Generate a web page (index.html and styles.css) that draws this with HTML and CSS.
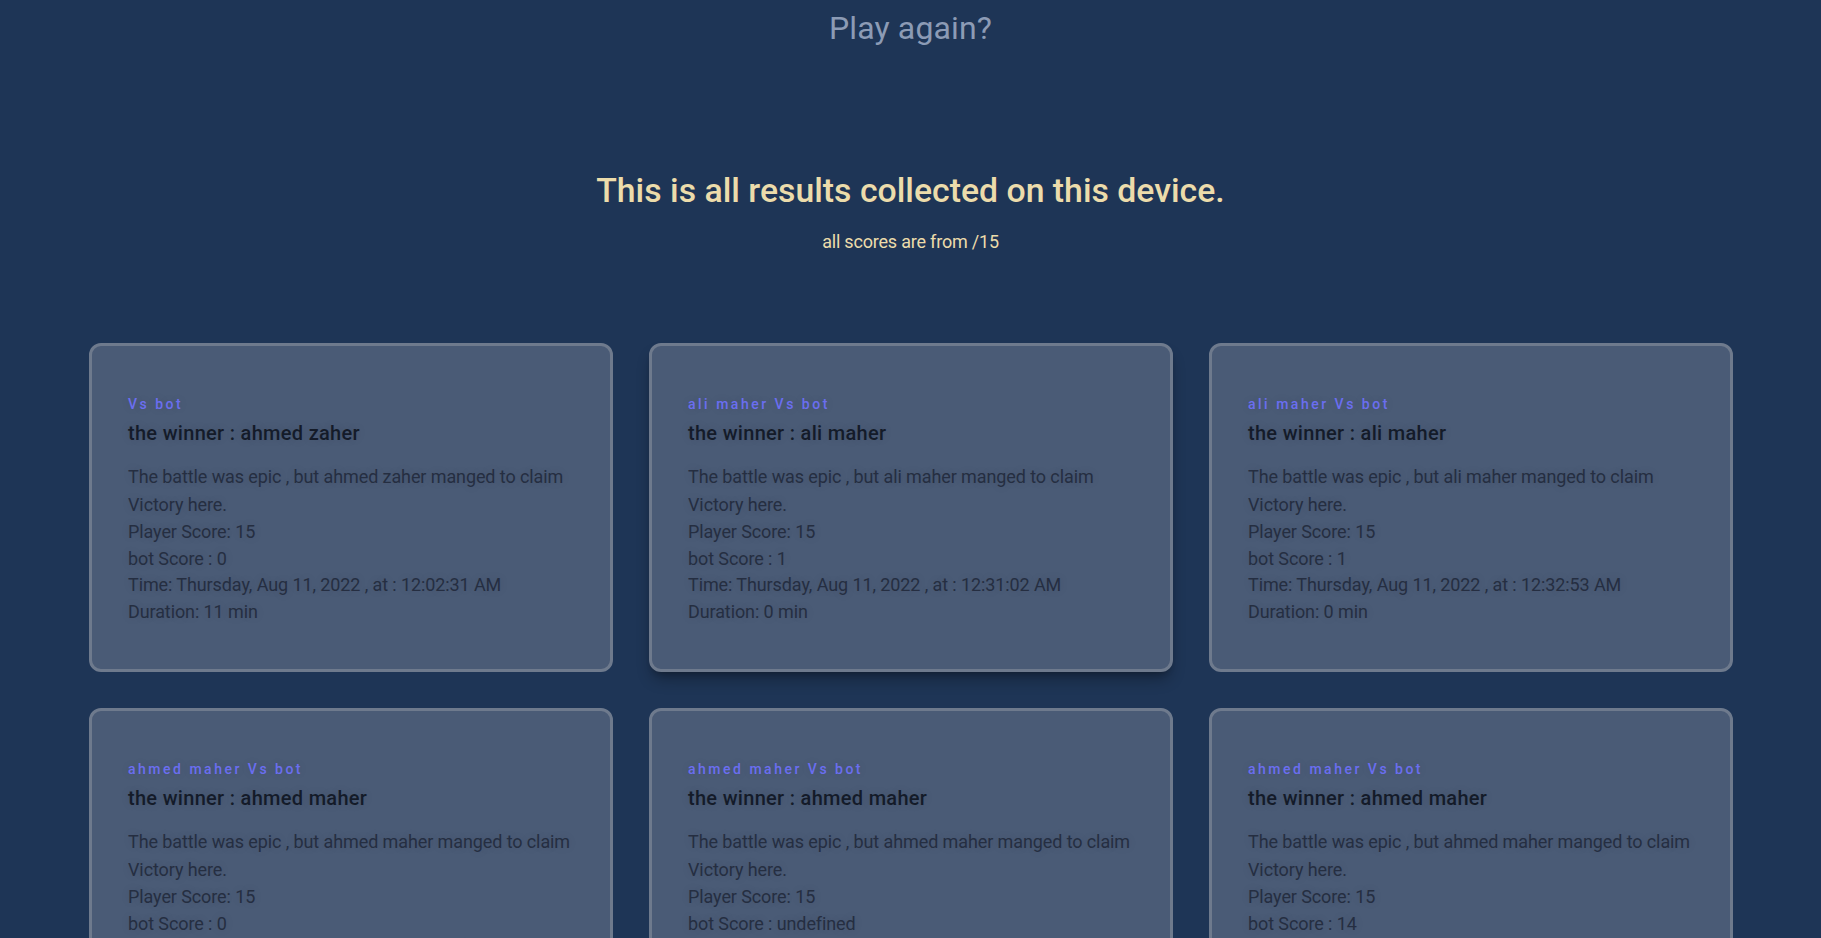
FILE: index.html
```html
<!DOCTYPE html>
<html lang="en">
<head>
<meta charset="utf-8">
<title>Results</title>
<link rel="stylesheet" href="styles.css">
</head>
<body>
<header class="top">
  <a class="play-again" href="#">Play again?</a>
</header>

<section class="intro">
  <h1 class="intro-title">This is all results collected on this device.</h1>
  <p class="intro-sub">all scores are from /15</p>
</section>

<main class="results">
  <article class="card">
    <h2 class="card-label">Vs bot</h2>
    <h3 class="card-title">the winner : ahmed zaher</h3>
    <p class="card-text">The battle was epic , but ahmed zaher manged to claim Victory here.</p>
    <div class="card-line">Player Score: 15</div>
    <div class="card-line">bot Score : 0</div>
    <div class="card-line">Time: Thursday, Aug 11, 2022 , at : 12:02:31 AM</div>
    <div class="card-line">Duration: 11 min</div>
  </article>

  <article class="card card-raised">
    <h2 class="card-label">ali maher Vs bot</h2>
    <h3 class="card-title">the winner : ali maher</h3>
    <p class="card-text">The battle was epic , but ali maher manged to claim Victory here.</p>
    <div class="card-line">Player Score: 15</div>
    <div class="card-line">bot Score : 1</div>
    <div class="card-line">Time: Thursday, Aug 11, 2022 , at : 12:31:02 AM</div>
    <div class="card-line">Duration: 0 min</div>
  </article>

  <article class="card">
    <h2 class="card-label">ali maher Vs bot</h2>
    <h3 class="card-title">the winner : ali maher</h3>
    <p class="card-text">The battle was epic , but ali maher manged to claim Victory here.</p>
    <div class="card-line">Player Score: 15</div>
    <div class="card-line">bot Score : 1</div>
    <div class="card-line">Time: Thursday, Aug 11, 2022 , at : 12:32:53 AM</div>
    <div class="card-line">Duration: 0 min</div>
  </article>

  <article class="card">
    <h2 class="card-label">ahmed maher Vs bot</h2>
    <h3 class="card-title">the winner : ahmed maher</h3>
    <p class="card-text">The battle was epic , but ahmed maher manged to claim Victory here.</p>
    <div class="card-line">Player Score: 15</div>
    <div class="card-line">bot Score : 0</div>
    <div class="card-line">Time: Thursday, Aug 11, 2022 , at : 12:40:17 AM</div>
    <div class="card-line">Duration: 1 min</div>
  </article>

  <article class="card">
    <h2 class="card-label">ahmed maher Vs bot</h2>
    <h3 class="card-title">the winner : ahmed maher</h3>
    <p class="card-text">The battle was epic , but ahmed maher manged to claim Victory here.</p>
    <div class="card-line">Player Score: 15</div>
    <div class="card-line">bot Score : undefined</div>
    <div class="card-line">Time: Thursday, Aug 11, 2022 , at : 12:44:05 AM</div>
    <div class="card-line">Duration: 0 min</div>
  </article>

  <article class="card">
    <h2 class="card-label">ahmed maher Vs bot</h2>
    <h3 class="card-title">the winner : ahmed maher</h3>
    <p class="card-text">The battle was epic , but ahmed maher manged to claim Victory here.</p>
    <div class="card-line">Player Score: 15</div>
    <div class="card-line">bot Score : 14</div>
    <div class="card-line">Time: Thursday, Aug 11, 2022 , at : 12:51:39 AM</div>
    <div class="card-line">Duration: 3 min</div>
  </article>
</main>
</body>
</html>
```

FILE: styles.css
```css
* {
  box-sizing: border-box;
}

html,
body {
  margin: 0;
  padding: 0;
}

body {
  background: #1e3556;
  font-family: Roboto, "Open Sans", "Liberation Sans", sans-serif;
  color: #252e41;
}

.top {
  padding-top: 8px;
  text-align: center;
  font-size: 32px;
  line-height: 40px;
}

.play-again {
  color: #8c9bb5;
  text-decoration: none;
  letter-spacing: 0.15px;
}

.intro {
  margin-top: 121px;
  text-align: center;
  color: #ecdcab;
}

.intro-title {
  margin: 0;
  font-size: 33.8px;
  line-height: 44px;
  font-weight: 500;
}

.intro-sub {
  margin: 15px 0 0;
  font-size: 18px;
  line-height: 28px;
  font-weight: 400;
  letter-spacing: -0.2px;
}

.results {
  display: grid;
  grid-template-columns: repeat(3, 1fr);
  gap: 36px;
  padding: 87px 88px 60px 89px;
}

.card {
  background: #4a5b76;
  border: 3px solid #6e7a8d;
  border-radius: 12px;
  padding: 48px 28px 44px 36px;
}

.card-raised {
  box-shadow: 0 10px 15px -3px rgba(0, 0, 0, 0.3), 0 4px 6px -4px rgba(0, 0, 0, 0.3);
}

.card-label {
  margin: 0;
  font-size: 14px;
  line-height: 20px;
  font-weight: 500;
  letter-spacing: 2.5px;
  color: #6b6ef0;
}

.card-title {
  margin: 5px 0 0;
  font-size: 20px;
  line-height: 28px;
  font-weight: 500;
  letter-spacing: 0.3px;
  color: #141b29;
}

.card-text {
  margin: 16px 0 0;
  font-size: 18px;
  line-height: 28px;
  letter-spacing: -0.1px;
}

.card-line {
  font-size: 18px;
  line-height: 26.6px;
  letter-spacing: -0.1px;
}

.card-label,
.card-title,
.card-text,
.card-line {
  text-shadow: 0 0 10px rgba(20, 27, 41, 0.12);
}
```
